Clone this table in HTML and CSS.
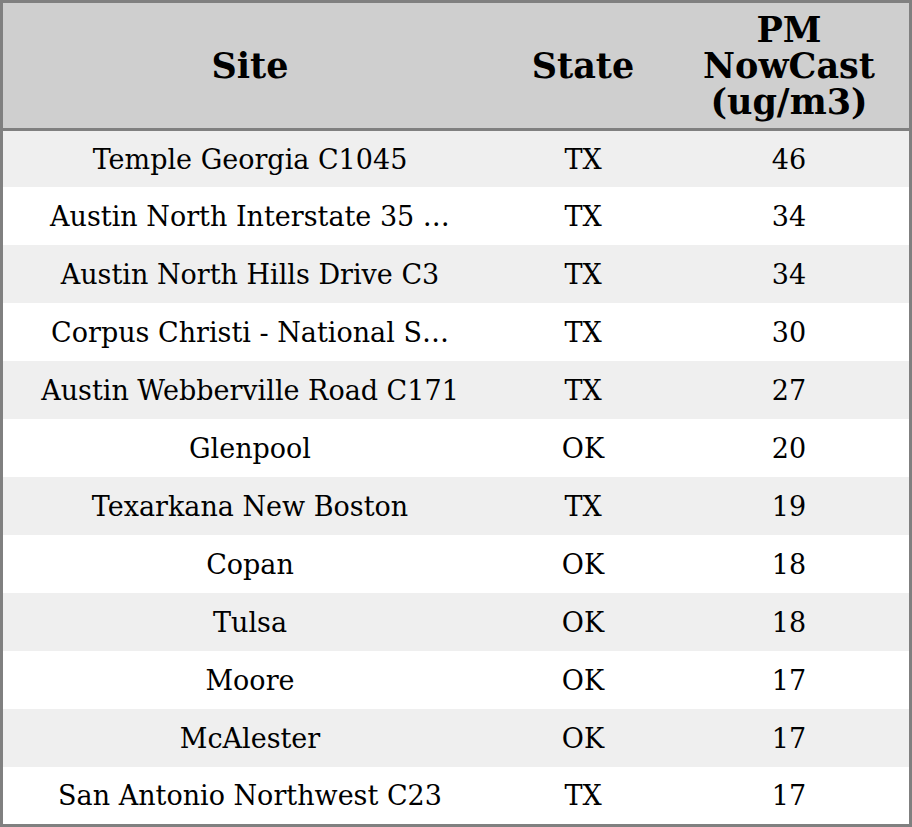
FILE: index.html
```html
<!DOCTYPE html>
<html>
<head>
<meta charset="utf-8">
<link rel="stylesheet" href="styles.css">
</head>
<body>
<div class="table">
  <div class="cell head">Site</div>
  <div class="cell head">State</div>
  <div class="cell head">PM<br>NowCast<br>(ug/m3)</div>

  <div class="cell odd site">Temple Georgia C1045</div><div class="cell odd">TX</div><div class="cell odd">46</div>
  <div class="cell site">Austin North Interstate 35 …</div><div class="cell">TX</div><div class="cell">34</div>
  <div class="cell odd site">Austin North Hills Drive C3</div><div class="cell odd">TX</div><div class="cell odd">34</div>
  <div class="cell site">Corpus Christi - National S…</div><div class="cell">TX</div><div class="cell">30</div>
  <div class="cell odd site">Austin Webberville Road C171</div><div class="cell odd">TX</div><div class="cell odd">27</div>
  <div class="cell site">Glenpool</div><div class="cell">OK</div><div class="cell">20</div>
  <div class="cell odd site">Texarkana New Boston</div><div class="cell odd">TX</div><div class="cell odd">19</div>
  <div class="cell site">Copan</div><div class="cell">OK</div><div class="cell">18</div>
  <div class="cell odd site">Tulsa</div><div class="cell odd">OK</div><div class="cell odd">18</div>
  <div class="cell site">Moore</div><div class="cell">OK</div><div class="cell">17</div>
  <div class="cell odd site">McAlester</div><div class="cell odd">OK</div><div class="cell odd">17</div>
  <div class="cell site">San Antonio Northwest C23</div><div class="cell">TX</div><div class="cell">17</div>
</div>
</body>
</html>
```
FILE: styles.css
```css
html, body {
  margin: 0;
  padding: 0;
  background: #ffffff;
}
.table {
  width: 912px;
  height: 827px;
  box-sizing: border-box;
  border: 3px solid #808080;
  display: grid;
  grid-template-columns: 494px 172px 240px;
  grid-template-rows: 128px 56px repeat(10, 58px) 57px;
  font-family: "DejaVu Serif", serif;
  font-size: 27px;
  color: #000000;
  background: #ffffff;
}
.cell {
  display: flex;
  align-items: center;
  justify-content: center;
  text-align: center;
  white-space: nowrap;
  overflow: hidden;
}
.head {
  background: #cfcfcf;
  border-bottom: 3px solid #808080;
  font-weight: bold;
  font-size: 35px;
  line-height: 36px;
}
.odd {
  background: #efefef;
}
.site {
  padding: 0 20px;
}
```
